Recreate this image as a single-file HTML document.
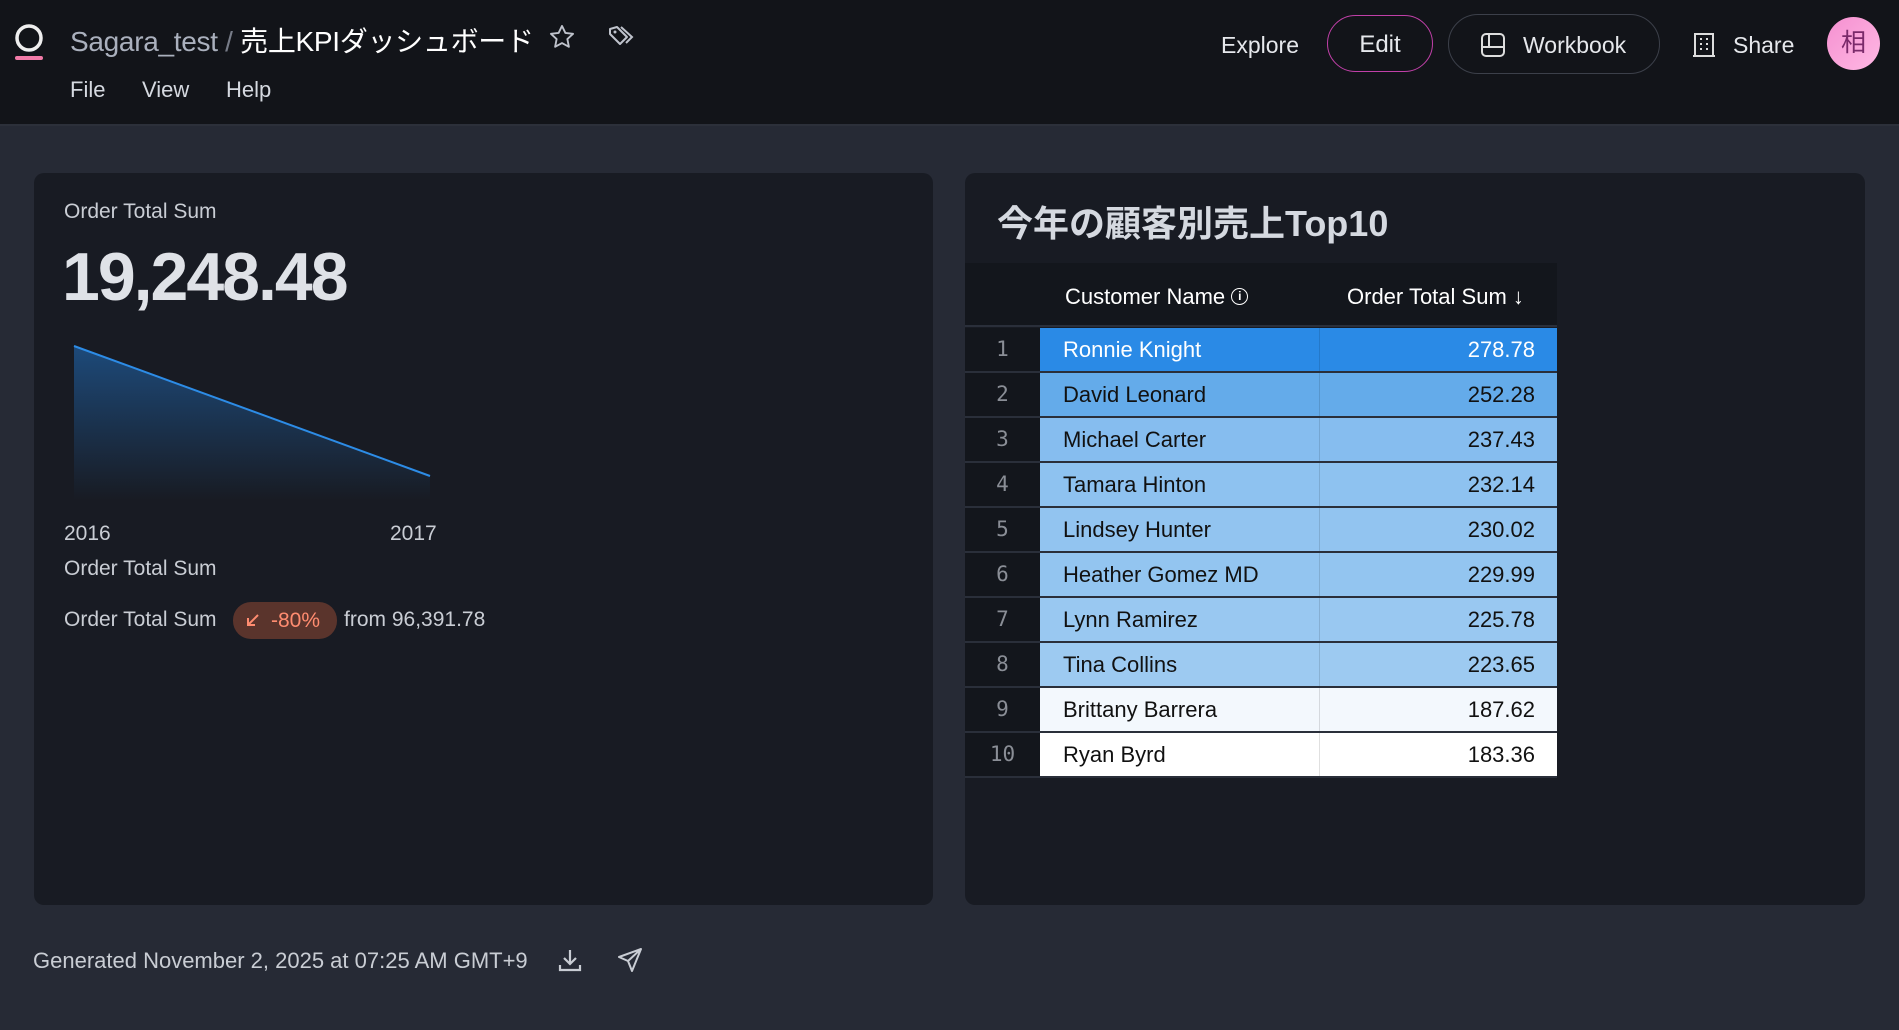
<!DOCTYPE html>
<html><head><meta charset="utf-8"><style>
*{margin:0;padding:0;box-sizing:border-box}
body{width:1899px;height:1030px;background:#262a35;font-family:"Liberation Sans","Noto Sans CJK JP",sans-serif;color:#e6e8ec;position:relative;overflow:hidden}
.hdr{position:absolute;left:0;top:0;width:1899px;height:126px;background:#121419;border-bottom:2px solid #2c303a}
.abs{position:absolute;white-space:nowrap}
.card{position:absolute;background:#181b23;border-radius:10px}
.row{position:absolute;left:965px;width:592px;height:45px;border-bottom:2px solid #2a2f3a;font-size:22px;color:#111}
.row .i{position:absolute;left:0;width:75px;height:100%;background:#13161c;color:#8a8e96;font-family:"DejaVu Sans Mono",monospace;font-size:21px;text-align:center;line-height:43px}
.row .n{position:absolute;left:75px;width:280px;height:100%;padding-left:23px;line-height:43px;border-right:1px solid rgba(0,0,0,.12)}
.row .v{position:absolute;left:355px;width:237px;height:100%;padding-right:22px;text-align:right;line-height:43px}
</style></head><body>
<div class="hdr"></div>
<svg class="abs" style="left:13px;top:22px" width="34" height="40"><circle cx="16" cy="16" r="12" fill="none" stroke="#eee" stroke-width="3.5"/><rect x="2" y="34" width="28" height="4" rx="2" fill="#f27ba8"/></svg>
<div class="abs" style="left:70px;top:20px;font-size:28px;color:#aab0bd;letter-spacing:-0.3px">Sagara_test <span style="color:#777c88">/</span> <span style="color:#fff">売上KPIダッシュボード</span></div>
<svg class="abs" style="left:548px;top:23px" width="28" height="28" viewBox="0 0 24 24"><path d="M12 2.5l2.9 6 6.6.8-4.9 4.5 1.3 6.6L12 17.2 6.1 20.4l1.3-6.6L2.5 9.3l6.6-.8z" fill="none" stroke="#bfc3cc" stroke-width="1.6" stroke-linejoin="round"/></svg>
<svg class="abs" style="left:607px;top:24px" width="30" height="26" viewBox="0 0 30 26"><path d="M3 5l7-2 10 10-7 7L3 10z" fill="none" stroke="#bfc3cc" stroke-width="2" stroke-linejoin="round"/><path d="M14 3l11 10-6 6" fill="none" stroke="#bfc3cc" stroke-width="2"/><circle cx="8" cy="8" r="1.5" fill="#bfc3cc"/></svg>
<div class="abs" style="left:70px;top:77px;font-size:22px;color:#d5d9e0">File</div>
<div class="abs" style="left:142px;top:77px;font-size:22px;color:#d5d9e0">View</div>
<div class="abs" style="left:226px;top:77px;font-size:22px;color:#d5d9e0">Help</div>
<div class="abs" style="left:1221px;top:32px;font-size:23px;color:#e6e8ec">Explore</div>
<div class="abs" style="left:1327px;top:15px;width:106px;height:57px;border:1.5px solid #c040a8;border-radius:29px;font-size:24px;text-align:center;line-height:58px">Edit</div>
<div class="abs" style="left:1448px;top:14px;width:212px;height:60px;border:1.5px solid #3c404a;border-radius:30px;font-size:23px;line-height:60px;padding-left:74px">Workbook</div>
<svg class="abs" style="left:1480px;top:32px" width="26" height="26" viewBox="0 0 26 26"><rect x="2" y="2" width="22" height="22" rx="4" fill="none" stroke="#ddd" stroke-width="2"/><path d="M9 2v13M2 15h22" stroke="#ddd" stroke-width="2"/></svg>
<svg class="abs" style="left:1692px;top:32px" width="24" height="26" viewBox="0 0 24 26"><rect x="3" y="2" width="18" height="22" fill="none" stroke="#ddd" stroke-width="2"/><path d="M1 24h22" stroke="#ddd" stroke-width="2"/><g fill="#ddd"><rect x="8" y="6" width="2" height="2"/><rect x="14" y="6" width="2" height="2"/><rect x="8" y="11" width="2" height="2"/><rect x="14" y="11" width="2" height="2"/><rect x="8" y="16" width="2" height="2"/><rect x="14" y="16" width="2" height="2"/></g></svg>
<div class="abs" style="left:1733px;top:32px;font-size:23px">Share</div>
<div class="abs" style="left:1827px;top:17px;width:53px;height:53px;border-radius:50%;background:linear-gradient(135deg,#f590d0,#ffb8e4);color:#7a2a6a;font-size:25px;text-align:center;line-height:53px">相</div>

<div class="card" style="left:34px;top:173px;width:899px;height:732px"></div>
<div class="abs" style="left:64px;top:200px;font-size:21px;color:#c9cdd4">Order Total Sum</div>
<div class="abs" style="left:62px;top:238px;font-size:68px;font-weight:bold;color:#dfe2e7;letter-spacing:-2px">19,248.48</div>
<svg class="abs" style="left:70px;top:340px" width="370" height="165"><defs><linearGradient id="g" x1="0" y1="0" x2="0" y2="1"><stop offset="0" stop-color="#1d4a7a"/><stop offset="1" stop-color="#181b23"/></linearGradient></defs><path d="M4 6L360 136L360 160L4 160Z" fill="url(#g)"/><path d="M4 6L360 136" stroke="#2d8ce6" stroke-width="2"/></svg>
<div class="abs" style="left:64px;top:522px;font-size:21px;color:#c9cdd4">2016</div>
<div class="abs" style="left:390px;top:522px;font-size:21px;color:#c9cdd4">2017</div>
<div class="abs" style="left:64px;top:557px;font-size:21px;color:#c9cdd4">Order Total Sum</div>
<div class="abs" style="left:64px;top:608px;font-size:21px;color:#c9cdd4">Order Total Sum</div>
<div class="abs" style="left:233px;top:602px;width:104px;height:37px;border-radius:18px;background:#5a342c;color:#ff8c70;font-size:21px;line-height:37px;padding-left:38px">-80%</div>
<svg class="abs" style="left:245px;top:612px" width="16" height="16"><path d="M13 3L3 13M3 6v7h7" fill="none" stroke="#ff8c70" stroke-width="2"/></svg>
<div class="abs" style="left:344px;top:608px;font-size:21px;color:#c9cdd4">from 96,391.78</div>

<div class="card" style="left:965px;top:173px;width:900px;height:732px"></div>
<div class="abs" style="left:997px;top:195px;font-size:36px;font-weight:bold;color:#d5d9e0">今年の顧客別売上Top10</div>
<div class="abs" style="left:965px;top:263px;width:592px;height:64px;background:#13161c;border-bottom:2px solid #2a2f3a"></div>
<div class="abs" style="left:1065px;top:284px;font-size:22px;color:#fff">Customer Name <span style="display:inline-block;width:17px;height:17px;border:1.5px solid #fff;border-radius:50%;font-size:12px;text-align:center;line-height:14px;vertical-align:4px;font-weight:bold">i</span></div>
<div class="abs" style="left:1347px;top:284px;font-size:22px;color:#fff">Order Total Sum ↓</div>

<div class="row" style="top:328px"><div class="i">1</div><div class="n" style="background:#2a8ae6;color:#fff">Ronnie Knight</div><div class="v" style="background:#2a8ae6;color:#fff">278.78</div></div>
<div class="row" style="top:373px"><div class="i">2</div><div class="n" style="background:#64abea">David Leonard</div><div class="v" style="background:#64abea">252.28</div></div>
<div class="row" style="top:418px"><div class="i">3</div><div class="n" style="background:#86bdef">Michael Carter</div><div class="v" style="background:#86bdef">237.43</div></div>
<div class="row" style="top:463px"><div class="i">4</div><div class="n" style="background:#8ec2f0">Tamara Hinton</div><div class="v" style="background:#8ec2f0">232.14</div></div>
<div class="row" style="top:508px"><div class="i">5</div><div class="n" style="background:#92c4f0">Lindsey Hunter</div><div class="v" style="background:#92c4f0">230.02</div></div>
<div class="row" style="top:553px"><div class="i">6</div><div class="n" style="background:#93c5f0">Heather Gomez MD</div><div class="v" style="background:#93c5f0">229.99</div></div>
<div class="row" style="top:598px"><div class="i">7</div><div class="n" style="background:#99c8f1">Lynn Ramirez</div><div class="v" style="background:#99c8f1">225.78</div></div>
<div class="row" style="top:643px"><div class="i">8</div><div class="n" style="background:#9dcaf1">Tina Collins</div><div class="v" style="background:#9dcaf1">223.65</div></div>
<div class="row" style="top:688px"><div class="i">9</div><div class="n" style="background:#f3f8fd">Brittany Barrera</div><div class="v" style="background:#f3f8fd">187.62</div></div>
<div class="row" style="top:733px"><div class="i">10</div><div class="n" style="background:#fff">Ryan Byrd</div><div class="v" style="background:#fff">183.36</div></div>

<div class="abs" style="left:33px;top:948px;font-size:22px;color:#c9cdd4">Generated November 2, 2025 at 07:25 AM GMT+9</div>
<svg class="abs" style="left:557px;top:947px" width="26" height="26" viewBox="0 0 26 26"><path d="M13 3v14M7 11l6 6 6-6M3 18v5h20v-5" fill="none" stroke="#c9cdd4" stroke-width="2.2"/></svg>
<svg class="abs" style="left:616px;top:946px" width="28" height="28" viewBox="0 0 28 28"><path d="M25 3L3 11l9 4 4 10zM12 15L25 3" fill="none" stroke="#c9cdd4" stroke-width="2" stroke-linejoin="round"/></svg>
</body></html>
